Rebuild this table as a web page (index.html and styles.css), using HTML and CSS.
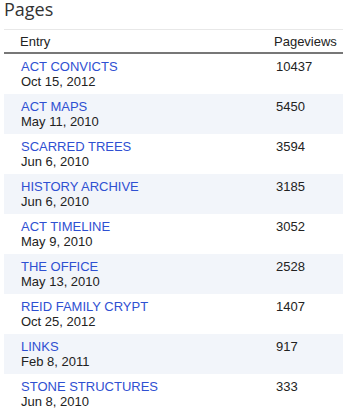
FILE: index.html
```html
<!DOCTYPE html>
<html>
<head>
<meta charset="utf-8">
<link rel="stylesheet" href="styles.css">
</head>
<body>
<div class="widget">
  <h2 class="title">Pages</h2>
  <div class="table">
    <div class="row head">
      <div class="c-entry">Entry</div>
      <div class="c-views">Pageviews</div>
    </div>
    <div class="row">
      <div class="c-entry"><a href="#">ACT CONVICTS</a><div class="date">Oct 15, 2012</div></div>
      <div class="c-views">10437</div>
    </div>
    <div class="row alt">
      <div class="c-entry"><a href="#">ACT MAPS</a><div class="date">May 11, 2010</div></div>
      <div class="c-views">5450</div>
    </div>
    <div class="row">
      <div class="c-entry"><a href="#">SCARRED TREES</a><div class="date">Jun 6, 2010</div></div>
      <div class="c-views">3594</div>
    </div>
    <div class="row alt">
      <div class="c-entry"><a href="#">HISTORY ARCHIVE</a><div class="date">Jun 6, 2010</div></div>
      <div class="c-views">3185</div>
    </div>
    <div class="row">
      <div class="c-entry"><a href="#">ACT TIMELINE</a><div class="date">May 9, 2010</div></div>
      <div class="c-views">3052</div>
    </div>
    <div class="row alt">
      <div class="c-entry"><a href="#">THE OFFICE</a><div class="date">May 13, 2010</div></div>
      <div class="c-views">2528</div>
    </div>
    <div class="row">
      <div class="c-entry"><a href="#">REID FAMILY CRYPT</a><div class="date">Oct 25, 2012</div></div>
      <div class="c-views">1407</div>
    </div>
    <div class="row alt">
      <div class="c-entry"><a href="#">LINKS</a><div class="date">Feb 8, 2011</div></div>
      <div class="c-views">917</div>
    </div>
    <div class="row">
      <div class="c-entry"><a href="#">STONE STRUCTURES</a><div class="date">Jun 8, 2010</div></div>
      <div class="c-views">333</div>
    </div>
  </div>
</div>
</body>
</html>
```

FILE: styles.css
```css
html, body {
  margin: 0;
  padding: 0;
  background: #fff;
}
.widget {
  padding-left: 4px;
  font-family: "Liberation Sans", Arial, sans-serif;
  font-size: 13px;
  line-height: 15px;
  color: #222;
}
.title {
  margin: 0;
  font-family: "Open Sans", sans-serif;
  font-weight: 400;
  font-size: 18px;
  line-height: 18px;
  color: #333;
  height: 29px;
  border-bottom: 1px solid #e8e8e8;
}
.row {
  display: grid;
  grid-template-columns: 1fr 69px;
  padding: 5px 0 5px;
}
.row.head {
  padding: 4px 0 3px;
  border-bottom: 2px solid #777;
}
.row.head .c-entry {
  padding-left: 16px;
}
.row.head .c-views {
  padding-left: 0;
}
.row.alt {
  background: #f2f5fa;
}
.c-entry {
  padding-left: 17px;
}
.c-views {
  padding-left: 2px;
}
a {
  color: #2f50d2;
  text-decoration: none;
}
.date {
  color: #222;
}
```
